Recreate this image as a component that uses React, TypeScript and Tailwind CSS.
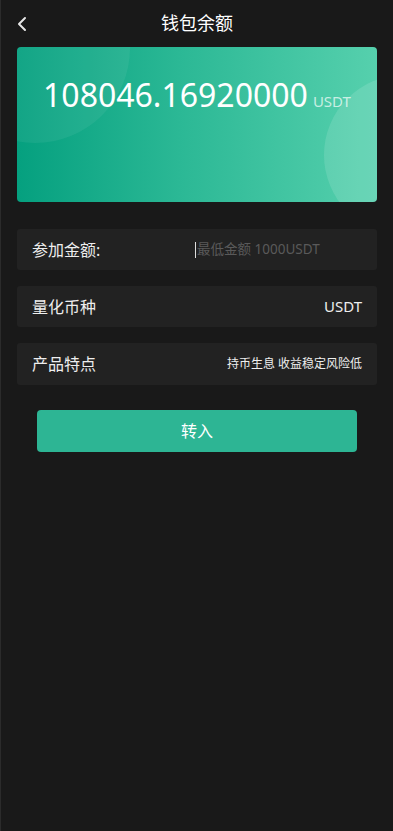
import React from "react";

const font = { fontFamily: '"Noto Sans", "Noto Sans CJK SC", sans-serif' };

export default function App() {
  return (
    <div
      className="min-h-[831px] w-[393px] bg-[#191919] border-l border-[#2b2b2b] text-white"
      style={font}
    >
      <div className="relative flex h-[47px] items-center justify-center">
        <svg
          className="absolute left-[15px] top-[16px]"
          width="12"
          height="16"
          viewBox="0 0 12 16"
          fill="none"
        >
          <path d="M9 2 L3 8 L9 14" stroke="#e6e6e6" strokeWidth="2" strokeLinecap="round" strokeLinejoin="round" />
        </svg>
        <span className="mb-[2px] text-[18px] leading-none text-white">钱包余额</span>
      </div>

      <div className="mx-[16px] relative h-[155px] overflow-hidden rounded-[4px] bg-[linear-gradient(90deg,#05a07f_0%,#2bb895_45%,#56d0ad_100%)]">
        <div className="absolute left-[-77px] top-[-94px] h-[190px] w-[190px] rounded-full bg-white/[0.06]" />
        <div className="absolute left-[307px] top-[28px] h-[160px] w-[160px] rounded-full bg-white/[0.12]" />
        <div className="relative flex items-baseline justify-center pt-[28px]">
          <span className="text-[32px] leading-[40px] text-white">108046.16920000</span>
          <span className="ml-[5px] text-[15px] text-white/70">USDT</span>
        </div>
      </div>

      <div className="mx-[16px] mt-[27px] flex flex-col gap-[16px]">
        <div className="flex h-[41px] items-center rounded-[3px] bg-[#222222] pl-[15px] pr-[15px]">
          <span className="w-[163px] text-[16px] text-[#eeeeee]">参加金额:</span>
          <span className="flex items-center text-[13.5px] text-[#5a5a5a]">
            <span className="mr-[1px] inline-block h-[16px] w-[1px] bg-[#dddddd]" />
            最低金额 1000USDT
          </span>
        </div>
        <div className="flex h-[41px] items-center justify-between rounded-[3px] bg-[#222222] px-[15px]">
          <span className="text-[16px] text-[#eeeeee]">量化币种</span>
          <span className="text-[15px] text-[#eeeeee]">USDT</span>
        </div>
        <div className="flex h-[42px] items-center justify-between rounded-[3px] bg-[#222222] px-[15px]">
          <span className="text-[16px] text-[#eeeeee]">产品特点</span>
          <span className="text-[12px] text-[#eeeeee]">持币生息 收益稳定风险低</span>
        </div>
      </div>

      <div className="mt-[25px] flex justify-center">
        <button className="flex h-[42px] w-[320px] items-center justify-center rounded-[4px] bg-[#2db594] text-[16px] text-white">
          转入
        </button>
      </div>
    </div>
  );
}
